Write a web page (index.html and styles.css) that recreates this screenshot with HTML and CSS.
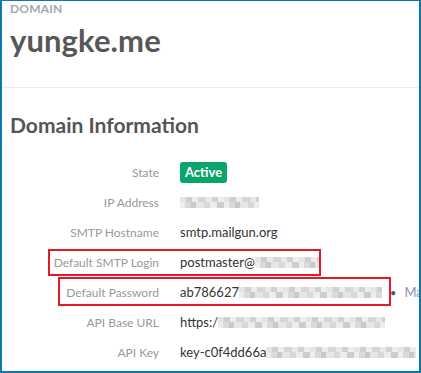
FILE: index.html
```html
<!DOCTYPE html>
<html>
<head>
<meta charset="utf-8">
<link rel="stylesheet" href="styles.css">
</head>
<body>
<div class="frame">
  <div class="header">
    <div class="eyebrow">DOMAIN</div>
    <h1 class="domain">yungke.me</h1>
  </div>
  <div class="section">
    <h2 class="title">Domain Information</h2>
    <div class="rows">
      <div class="row"><div class="label">State</div><div class="value"><span class="badge">Active</span></div></div>
      <div class="row"><div class="label">IP Address</div><div class="value"><span class="blur b-ip"></span></div></div>
      <div class="row"><div class="label">SMTP Hostname</div><div class="value">smtp.mailgun.org</div></div>
      <div class="row"><div class="label">Default SMTP Login</div><div class="value">postmaster@<span class="blur b-login"></span></div></div>
      <div class="row"><div class="label">Default Password</div><div class="value">ab786627<span class="blur b-pass"></span><span class="dot">•</span><span class="manage">Manage</span></div></div>
      <div class="row"><div class="label">API Base URL</div><div class="value">https:/<span class="blur b-url"></span></div></div>
      <div class="row"><div class="label">API Key</div><div class="value">key-c0f4dd66a<span class="blur b-key"></span></div></div>
      <div class="mark mark-login"></div>
      <div class="mark mark-pass"></div>
    </div>
  </div>
</div>
</body>
</html>
```

FILE: styles.css
```css
html, body {
  margin: 0;
  padding: 0;
  background: #fff;
}
.frame {
  box-sizing: border-box;
  width: 421px;
  height: 373px;
  border: solid #0b78ae;
  border-width: 1px 2px 2px 2px;
  overflow: hidden;
  font-family: Lato, "Open Sans", sans-serif;
  color: #444;
}
.header {
  height: 87px;
  padding-left: 8px;
  border-bottom: 1px solid #ececec;
  box-sizing: border-box;
}
.eyebrow {
  font-size: 12px;
  font-weight: 700;
  color: #a4a8ae;
  line-height: 14px;
  padding-top: 1px;
  letter-spacing: 0.2px;
}
.domain {
  margin: 0;
  font-size: 31px;
  font-weight: 700;
  color: #575757;
  line-height: 36px;
  margin-top: 6px;
  letter-spacing: 0.1px;
}
.section {
  padding: 23px 0 0 8px;
}
.title {
  margin: 0;
  font-size: 21px;
  line-height: 28px;
  font-weight: 700;
  color: #555;
}
.rows {
  position: relative;
  margin-top: 18px;
  margin-left: -8px;
}
.row {
  display: grid;
  grid-template-columns: 157px 1fr;
  column-gap: 21px;
  height: 30px;
  align-items: center;
  font-size: 13px;
}
.label {
  text-align: right;
  color: #999;
  white-space: nowrap;
  font-size: 12px;
}
.value {
  color: #333;
  white-space: nowrap;
  display: flex;
  align-items: center;
}
.badge {
  display: inline-block;
  background: #0aa56b;
  color: #fff;
  font-weight: 700;
  border-radius: 3px;
  padding: 0 5px;
  height: 21px;
  line-height: 21px;
}
.blur {
  display: inline-block;
  height: 11px;
  background:
    linear-gradient(90deg, #e4e4e4 0 6px, #cfcfcf 6px 12px, #ececec 12px 18px, #d6d6d6 18px 26px, #e8e8e8 26px 32px, #d2d2d2 32px 38px, #eeeeee 38px 44px) 0 0 / 44px 5px repeat-x,
    linear-gradient(90deg, #eeeeee 0 5px, #dadada 5px 11px, #c9c9c9 11px 16px, #e6e6e6 16px 24px, #d8d8d8 24px 30px, #ededed 30px 37px, #cdcdcd 37px 44px) 0 5px / 44px 6px repeat-x;
}
.b-ip { width: 79px; }
.b-login { width: 64px; }
.b-pass { width: 143px; }
.b-url { width: 167px; }
.b-key { width: 150px; }
.dot {
  margin-left: 8px;
  color: #555;
  font-size: 11px;
}
.manage {
  margin-left: 8px;
  color: #8a95a3;
}
.mark {
  position: absolute;
  border: 2px solid #e3192a;
  box-sizing: border-box;
}
.mark-login {
  left: 46px;
  top: 92px;
  width: 273px;
  height: 27px;
}
.mark-pass {
  left: 56px;
  top: 120px;
  width: 333px;
  height: 29px;
}
```
